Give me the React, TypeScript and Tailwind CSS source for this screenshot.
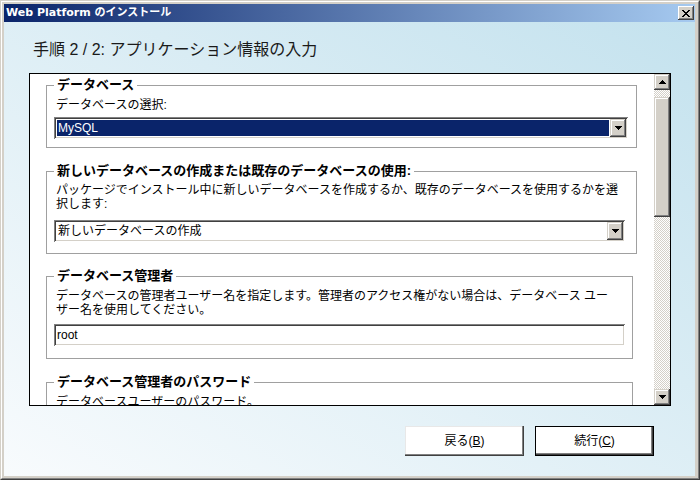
import React from "react";

function Arrow({ up }: { up?: boolean }) {
  return (
    <svg width="7" height="4" viewBox="0 0 7 4" className={up ? "rotate-180" : ""}>
      <path d="M0 0h7v1H0zM1 1h5v1H1zM2 2h3v1H2zM3 3h1v1H3z" fill="#000" />
    </svg>
  );
}

function DropBtn() {
  return (
    <div className="w-[16px] h-full bg-[#d4d0c8] flex items-center justify-center shadow-[inset_-1px_-1px_0_#404040,inset_1px_1px_0_#d4d0c8,inset_-2px_-2px_0_#808080,inset_2px_2px_0_#ffffff]">
      <Arrow />
    </div>
  );
}

export default function App() {
  return (
    <div className="w-[700px] h-[480px] bg-[#d4d0c8] border border-t-[#d4d0c8] border-l-[#d4d0c8] border-r-[#404040] border-b-[#404040] font-['Liberation_Sans','Noto_Sans_CJK_JP',sans-serif] text-black overflow-hidden">
      <div className="h-full border border-t-white border-l-white border-r-[#808080] border-b-[#808080] pt-[2px] pl-[2px] pr-[3px] pb-[2px] flex flex-col">
        {/* title bar */}
        <div className="h-[18px] flex items-center bg-[linear-gradient(to_right,#0a246a,#a6caf0)] pl-[2px] pr-[1px]">
          <span className="flex-1 text-white text-[11px] font-bold font-['DejaVu_Sans','Noto_Sans_CJK_JP',sans-serif] leading-[14px] whitespace-nowrap">
            Web Platform のインストール
          </span>
          <div className="w-[16px] h-[14px] bg-[#d4d0c8] flex items-center justify-center shadow-[inset_-1px_-1px_0_#404040,inset_1px_1px_0_#ffffff,inset_-2px_-2px_0_#808080,inset_2px_2px_0_#d4d0c8]">
            <svg width="8" height="7" viewBox="0 0 8 7">
              <path d="M0 0h2v1H0zM6 0h2v1H6zM1 1h2v1H1zM5 1h2v1H5zM2 2h4v1H2zM3 3h2v1H3zM2 4h4v1H2zM1 5h2v1H1zM5 5h2v1H5zM0 6h2v1H0zM6 6h2v1H6z" fill="#000" />
            </svg>
          </div>
        </div>
        {/* body */}
        <div className="flex-1 flex flex-col bg-[linear-gradient(to_top_right,#f8fbfd,#c4e2ee)]">
          <div className="pl-[29px] pt-[18px] text-[16px] leading-[20px] text-[#1a1a1a] whitespace-nowrap">
            手順 2 / 2: アプリケーション情報の入力
          </div>
          <div className="ml-[25px] mt-[13px] w-[642px] h-[333px] border border-black bg-white flex">
            <div className="flex-1 overflow-hidden pt-[3px] text-[12px] leading-[14px]">
              {/* group 1 */}
              <fieldset className="ml-[16px] w-[591px] border border-[#a0a0a0] px-[7px] pb-[8px]">
                <legend className="px-[3px] text-[13px] font-bold leading-[16px]">データベース</legend>
                <div className="mt-[5px] pl-[2px] whitespace-nowrap">データベースの選択:</div>
                <div className="mt-[5px] w-[574px] h-[22px] bg-white flex p-[2px] shadow-[inset_1px_1px_0_#808080,inset_-1px_-1px_0_#ffffff,inset_2px_2px_0_#404040,inset_-2px_-2px_0_#d4d0c8]">
                  <div className="flex-1 m-[1px] bg-[#0a246a] text-white pl-[1px] leading-[16px]">MySQL</div>
                  <DropBtn />
                </div>
              </fieldset>
              {/* group 2 */}
              <fieldset className="ml-[16px] mt-[15px] w-[591px] border border-[#a0a0a0] px-[7px] pb-[11px]">
                <legend className="px-[3px] text-[13px] font-bold leading-[16px] whitespace-nowrap">新しいデータベースの作成または既存のデータベースの使用:</legend>
                <div className="mt-[4px] pl-[2px] whitespace-nowrap">
                  パッケージでインストール中に新しいデータベースを作成するか、既存のデータベースを使用するかを選
                  <br />
                  択します:
                </div>
                <div className="mt-[9px] w-[571px] h-[22px] bg-white flex p-[2px] shadow-[inset_1px_1px_0_#808080,inset_-1px_-1px_0_#ffffff,inset_2px_2px_0_#404040,inset_-2px_-2px_0_#d4d0c8]">
                  <div className="flex-1 pl-[2px] leading-[18px] whitespace-nowrap">新しいデータベースの作成</div>
                  <DropBtn />
                </div>
              </fieldset>
              {/* group 3 */}
              <fieldset className="ml-[16px] mt-[14px] w-[586px] border border-[#a0a0a0] px-[7px] pb-[12px]">
                <legend className="px-[3px] text-[13px] font-bold leading-[16px]">データベース管理者</legend>
                <div className="mt-[5px] pl-[2px] whitespace-nowrap">
                  データベースの管理者ユーザー名を指定します。管理者のアクセス権がない場合は、データベース ユー
                  <br />
                  ザー名を使用してください。
                </div>
                <div className="mt-[7px] w-[571px] h-[22px] bg-white pl-[3px] pt-[2px] leading-[18px] shadow-[inset_1px_1px_0_#808080,inset_-1px_-1px_0_#ffffff,inset_2px_2px_0_#404040,inset_-2px_-2px_0_#d4d0c8]">
                  root
                </div>
              </fieldset>
              {/* group 4 */}
              <fieldset className="ml-[16px] mt-[15px] w-[586px] border border-[#a0a0a0] px-[7px] pb-[12px]">
                <legend className="px-[3px] text-[13px] font-bold leading-[16px]">データベース管理者のパスワード</legend>
                <div className="mt-[5px] pl-[2px] whitespace-nowrap">データベースユーザーのパスワード。</div>
                <div className="mt-[7px] w-[571px] h-[22px] bg-white shadow-[inset_1px_1px_0_#808080,inset_-1px_-1px_0_#ffffff,inset_2px_2px_0_#404040,inset_-2px_-2px_0_#d4d0c8]" />
              </fieldset>
            </div>
            {/* scrollbar */}
            <div className="w-[16px] flex flex-col">
              <div className="h-[16px] bg-[#d4d0c8] flex items-center justify-center shadow-[inset_-1px_-1px_0_#404040,inset_1px_1px_0_#d4d0c8,inset_-2px_-2px_0_#808080,inset_2px_2px_0_#ffffff]">
                <Arrow up />
              </div>
              <div className="h-[7px] bg-[repeating-conic-gradient(#d4d0c8_0%_25%,#ffffff_0%_50%)] bg-[length:2px_2px]" />
              <div className="h-[120px] bg-[#d4d0c8] shadow-[inset_-1px_-1px_0_#404040,inset_1px_1px_0_#d4d0c8,inset_-2px_-2px_0_#808080,inset_2px_2px_0_#ffffff]" />
              <div className="flex-1 bg-[repeating-conic-gradient(#d4d0c8_0%_25%,#ffffff_0%_50%)] bg-[length:2px_2px]" />
              <div className="h-[16px] bg-[#d4d0c8] flex items-center justify-center shadow-[inset_-1px_-1px_0_#404040,inset_1px_1px_0_#d4d0c8,inset_-2px_-2px_0_#808080,inset_2px_2px_0_#ffffff]">
                <Arrow />
              </div>
            </div>
          </div>
          {/* buttons */}
          <div className="mt-[20px] flex justify-end gap-[11px] pr-[41px]">
            <div className="w-[119px] h-[30px] bg-white flex items-center justify-center text-[12px] shadow-[inset_-1px_-1px_0_#404040,inset_-2px_-2px_0_#808080,inset_1px_1px_0_#e8e8e8]">
              戻る(<span className="underline">B</span>)
            </div>
            <div className="w-[119px] h-[30px] bg-white border border-black flex items-center justify-center text-[12px] shadow-[inset_-1px_-1px_0_#404040,inset_-2px_-2px_0_#808080]">
              続行(<span className="underline">C</span>)
            </div>
          </div>
        </div>
      </div>
    </div>
  );
}
